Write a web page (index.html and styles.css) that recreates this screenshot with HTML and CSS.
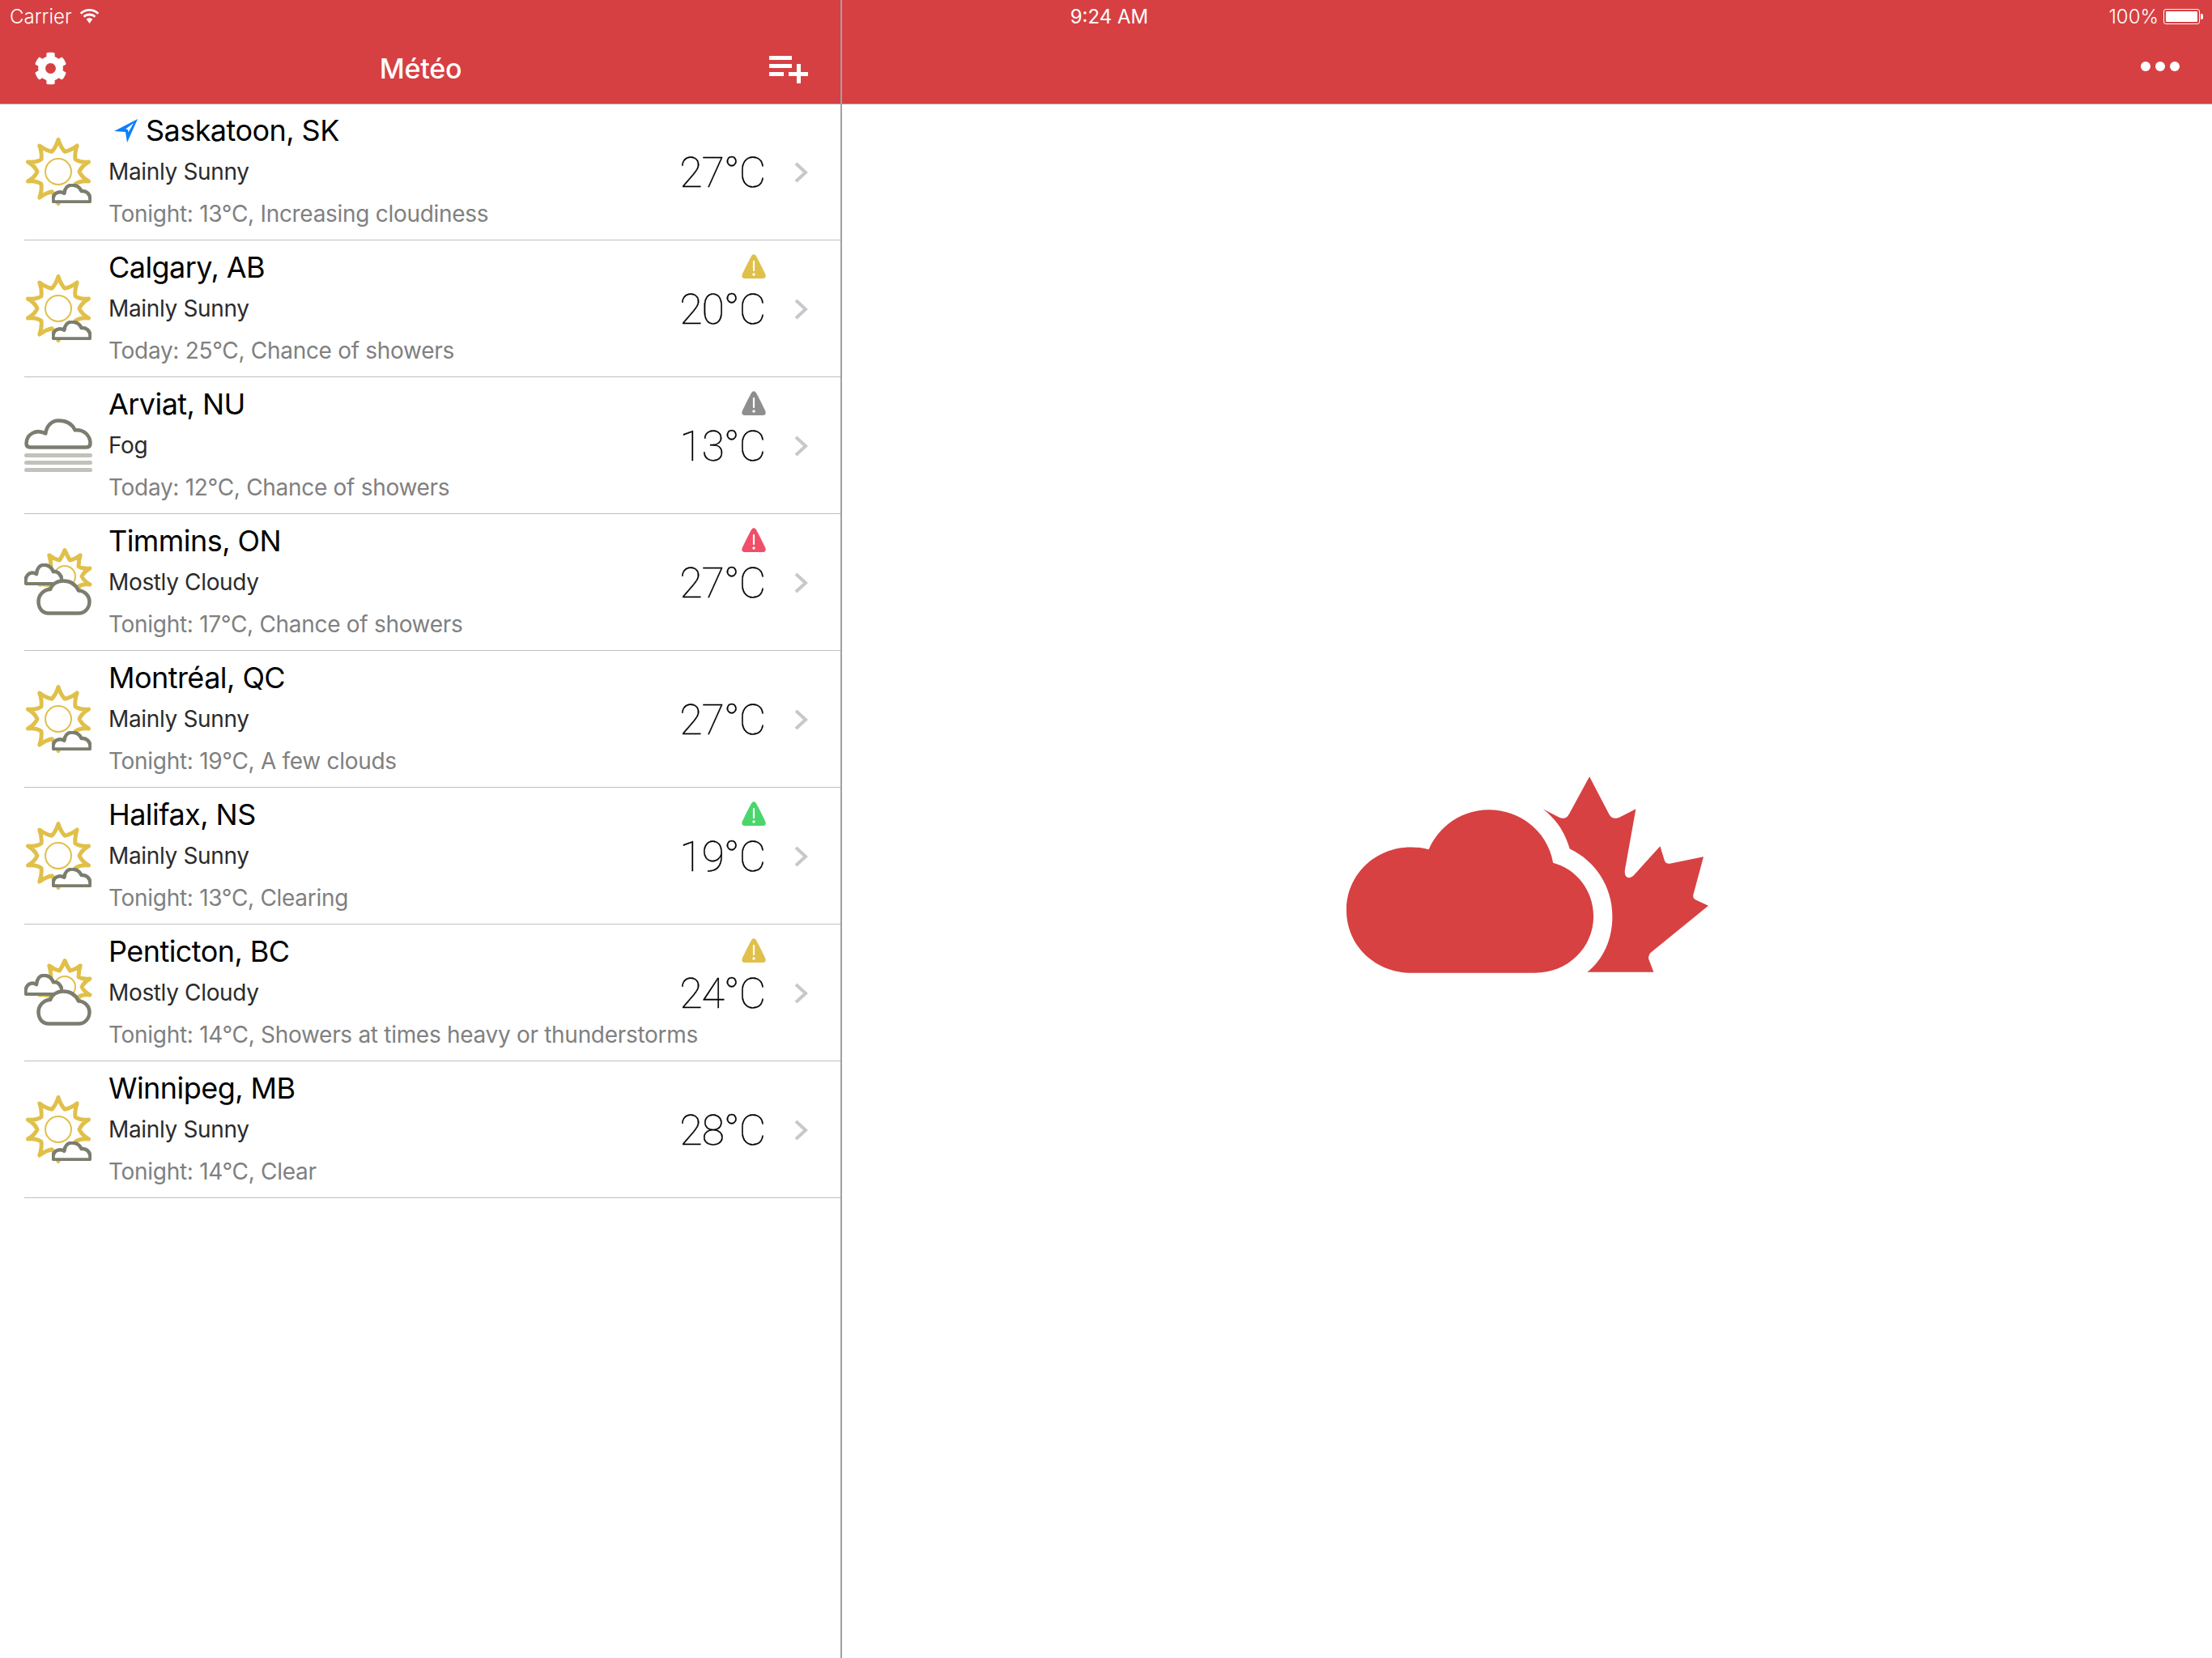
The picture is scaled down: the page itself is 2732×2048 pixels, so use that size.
FILE: index.html
```html
<!DOCTYPE html>
<html lang="fr">
<head>
<meta charset="utf-8">
<title>Météo</title>
<link rel="stylesheet" href="styles.css">
</head>
<body>
<svg class="defs" width="0" height="0" aria-hidden="true">
  <defs>
    <symbol id="cloud-flat" viewBox="0 0 83 37" preserveAspectRatio="none">
      <path class="cloud-line" d="M7 34.5H76Q80.5 34.5 80.5 30C80.5 20 72 12.5 62 14C58 6 50 2.5 42 2.5C33 2.5 27 9 26 18C14 12 2.5 19 2.5 30Q2.5 34.5 7 34.5Z"/>
    </symbol>
    <symbol id="cloud-round" viewBox="0 0 68 45" preserveAspectRatio="none">
      <path class="cloud-line" d="M15 42.5H52C60 42.5 65.5 36 65.5 28C65.5 21 60 15 52 14.5C48 6 41 2.5 33 2.5C25 2.5 19 7 17 13C9 13 2.5 20 2.5 28C2.5 36 7 42.5 15 42.5Z"/>
    </symbol>
    <symbol id="ic-sunny" viewBox="0 0 88 88">
      <path class="sun-ray" d="M44 4.5Q47 14 52 19.3Q59 18 67.2 12Q64 21 65 28.7Q71 33 81.5 32Q73 37 70 44Q73 51 81.5 56Q71 55 65 59.3Q64 67 67.2 76Q59 70 52 68.7Q47 74 44 83.5Q41 74 36 68.7Q29 70 20.8 76Q24 67 23 59.3Q17 55 6.5 56Q15 51 18 44Q15 37 6.5 32Q17 33 23 28.7Q24 21 20.8 12Q29 18 36 19.3Q41 14 44 4.5Z"/>
      <circle class="sun-disc" cx="44" cy="44" r="16"/>
      <use href="#cloud-flat" class="cloud" x="36" y="59" width="49" height="24"/>
    </symbol>
    <symbol id="ic-cloudy" viewBox="0 0 88 88">
      <path class="sun-ray" d="M52 4.5Q55 12 58.5 17Q64 16 71.2 10.8Q69 18 69 24.7Q74 28 83 27Q76 31 73 37Q76 43 83 47Q74 46 69 49.3Q69 56 71.2 63.2Q64 58 58.5 57Q55 62 52 69.5Q49 62 45.5 57Q40 58 32.8 63.2Q35 56 35 49.3Q30 46 21 47Q28 43 31 37Q28 31 21 27Q30 28 35 24.7Q35 18 32.8 10.8Q40 16 45.5 17Q49 12 52 4.5Z"/>
      <circle class="sun-disc" cx="52" cy="37" r="13"/>
      <use href="#cloud-flat" class="cloud" x="2" y="21" width="48" height="27"/>
      <use href="#cloud-round" class="cloud" x="17" y="40" width="68" height="45"/>
    </symbol>
    <symbol id="ic-fog" viewBox="0 0 88 88">
      <use href="#cloud-flat" class="cloud" x="2" y="11" width="84" height="38"/>
      <rect class="fog-bar" x="2" y="54" width="84" height="5" rx="2.5"/>
      <rect class="fog-bar" x="2" y="63" width="84" height="5" rx="2.5"/>
      <rect class="fog-bar" x="2" y="72" width="84" height="5" rx="2.5"/>
    </symbol>
    <symbol id="ic-alert" viewBox="0 0 30 30">
      <path fill="currentColor" d="M12.6 1.6Q15 -1 17.4 1.6Q19 3.6 29.2 24.6Q31 30 26 30H4Q-1 30 .8 24.6Q11 3.6 12.6 1.6Z"/>
      <rect x="13.9" y="8" width="2.2" height="13" rx="1" fill="#fff"/>
      <circle cx="15" cy="25" r="1.7" fill="#fff"/>
    </symbol>
    <symbol id="ic-chevron" viewBox="0 0 17 26">
      <path d="M2 2L14 13L2 24" fill="none" stroke="#c7c7cc" stroke-width="4"/>
    </symbol>
  </defs>
</svg>

<div class="status-bar">
  <div class="status-left">
    <span>Carrier</span>
    <svg class="wifi" viewBox="0 0 23 17" width="25" height="18"><path fill="#fff" d="M11.5 0C7.2 0 3.3 1.7.4 4.4L2.2 6.3C4.6 4 7.9 2.6 11.5 2.6S18.4 4 20.8 6.3L22.6 4.4C19.7 1.7 15.8 0 11.5 0ZM11.5 5.3C8.7 5.3 6.1 6.4 4.1 8.2L5.9 10.1C7.4 8.8 9.4 8 11.5 8S15.6 8.8 17.1 10.1L18.9 8.2C16.9 6.4 14.3 5.3 11.5 5.3ZM11.5 10.6C10.1 10.6 8.9 11.1 7.9 12L11.5 17L15.1 12C14.1 11.1 12.9 10.6 11.5 10.6Z"/></svg>
  </div>
  <div class="status-time">9:24 AM</div>
  <div class="status-right">
    <span>100%</span>
    <span class="battery"><span class="battery-fill"></span></span>
    <span class="battery-nub"></span>
  </div>
</div>

<div class="app">
  <aside class="master">
    <header class="nav">
      <svg class="gear" viewBox="0 0 512 512" width="41" height="41"><path fill="#fff" d="M487.4 315.7l-42.6-24.6c4.3-23.2 4.3-47 0-70.2l42.6-24.6c4.9-2.8 7.1-8.6 5.5-14-11.1-35.6-30-67.8-54.7-94.6-3.8-4.1-10-5.1-14.8-2.3L380.8 110c-17.9-15.4-38.5-27.3-60.8-35.1V25.8c0-5.6-3.9-10.5-9.4-11.7-36.7-8.2-74.3-7.8-109.2 0-5.5 1.2-9.4 6.1-9.4 11.7V75c-22.2 7.9-42.8 19.8-60.8 35.1L88.7 85.5c-4.9-2.8-11-1.9-14.8 2.3-24.7 26.7-43.6 58.9-54.7 94.6-1.7 5.4.6 11.2 5.5 14L67.3 221c-4.3 23.2-4.3 47 0 70.2l-42.6 24.6c-4.9 2.8-7.1 8.6-5.5 14 11.1 35.6 30 67.8 54.7 94.6 3.8 4.1 10 5.1 14.8 2.3l42.6-24.6c17.9 15.4 38.5 27.3 60.8 35.1v49.2c0 5.6 3.9 10.5 9.4 11.7 36.7 8.2 74.3 7.8 109.2 0 5.5-1.2 9.4-6.1 9.4-11.7v-49.2c22.2-7.9 42.8-19.8 60.8-35.1l42.6 24.6c4.9 2.8 11 1.9 14.8-2.3 24.7-26.7 43.6-58.9 54.7-94.6 1.5-5.5-.7-11.3-5.6-14.1zM256 336c-44.1 0-80-35.9-80-80s35.9-80 80-80 80 35.9 80 80-35.9 80-80 80z"/></svg>
      <h1 class="nav-title">Météo</h1>
      <svg class="add-list" viewBox="0 0 48 34" width="48" height="34"><path fill="#fff" d="M0 0H28V5H0ZM0 10H28V15H0ZM0 20H18V25H0ZM24 20H34V10H39V20H48V25H39V34H34V25H24Z"/></svg>
    </header>
    <ul class="cities">
      <li class="city">
        <svg class="wx"><use href="#ic-sunny"/></svg>
        <div class="city-text">
          <div class="city-name"><svg class="loc" viewBox="0 0 29 29" width="29" height="29"><path fill="#0a80ff" fill-rule="evenodd" d="M29 0L0 15L14 16L16 29ZM24 5L14 12.5L17 13L17.5 16.5Z"/></svg>Saskatoon, SK</div>
          <div class="city-cond">Mainly Sunny</div>
          <div class="city-fc">Tonight: 13°C, Increasing cloudiness</div>
        </div>
        <div class="city-temp">27°C</div>
        <svg class="chev"><use href="#ic-chevron"/></svg>
      </li>
      <li class="city">
        <svg class="wx"><use href="#ic-sunny"/></svg>
        <div class="city-text">
          <div class="city-name">Calgary, AB</div>
          <div class="city-cond">Mainly Sunny</div>
          <div class="city-fc">Today: 25°C, Chance of showers</div>
        </div>
        <svg class="alert alert-yellow"><use href="#ic-alert"/></svg>
        <div class="city-temp">20°C</div>
        <svg class="chev"><use href="#ic-chevron"/></svg>
      </li>
      <li class="city">
        <svg class="wx"><use href="#ic-fog"/></svg>
        <div class="city-text">
          <div class="city-name">Arviat, NU</div>
          <div class="city-cond">Fog</div>
          <div class="city-fc">Today: 12°C, Chance of showers</div>
        </div>
        <svg class="alert alert-gray"><use href="#ic-alert"/></svg>
        <div class="city-temp">13°C</div>
        <svg class="chev"><use href="#ic-chevron"/></svg>
      </li>
      <li class="city">
        <svg class="wx"><use href="#ic-cloudy"/></svg>
        <div class="city-text">
          <div class="city-name">Timmins, ON</div>
          <div class="city-cond">Mostly Cloudy</div>
          <div class="city-fc">Tonight: 17°C, Chance of showers</div>
        </div>
        <svg class="alert alert-red"><use href="#ic-alert"/></svg>
        <div class="city-temp">27°C</div>
        <svg class="chev"><use href="#ic-chevron"/></svg>
      </li>
      <li class="city">
        <svg class="wx"><use href="#ic-sunny"/></svg>
        <div class="city-text">
          <div class="city-name">Montréal, QC</div>
          <div class="city-cond">Mainly Sunny</div>
          <div class="city-fc">Tonight: 19°C, A few clouds</div>
        </div>
        <div class="city-temp">27°C</div>
        <svg class="chev"><use href="#ic-chevron"/></svg>
      </li>
      <li class="city">
        <svg class="wx"><use href="#ic-sunny"/></svg>
        <div class="city-text">
          <div class="city-name">Halifax, NS</div>
          <div class="city-cond">Mainly Sunny</div>
          <div class="city-fc">Tonight: 13°C, Clearing</div>
        </div>
        <svg class="alert alert-green"><use href="#ic-alert"/></svg>
        <div class="city-temp">19°C</div>
        <svg class="chev"><use href="#ic-chevron"/></svg>
      </li>
      <li class="city">
        <svg class="wx"><use href="#ic-cloudy"/></svg>
        <div class="city-text">
          <div class="city-name">Penticton, BC</div>
          <div class="city-cond">Mostly Cloudy</div>
          <div class="city-fc">Tonight: 14°C, Showers at times heavy or thunderstorms</div>
        </div>
        <svg class="alert alert-yellow"><use href="#ic-alert"/></svg>
        <div class="city-temp">24°C</div>
        <svg class="chev"><use href="#ic-chevron"/></svg>
      </li>
      <li class="city">
        <svg class="wx"><use href="#ic-sunny"/></svg>
        <div class="city-text">
          <div class="city-name">Winnipeg, MB</div>
          <div class="city-cond">Mainly Sunny</div>
          <div class="city-fc">Tonight: 14°C, Clear</div>
        </div>
        <div class="city-temp">28°C</div>
        <svg class="chev"><use href="#ic-chevron"/></svg>
      </li>
    </ul>
  </aside>
  <main class="detail">
    <header class="nav nav-detail">
      <svg class="more" viewBox="0 0 48 12" width="48" height="12"><circle cx="6" cy="6" r="6" fill="#fff"/><circle cx="24" cy="6" r="6" fill="#fff"/><circle cx="42" cy="6" r="6" fill="#fff"/></svg>
    </header>
    <div class="splash">
      <svg class="logo" viewBox="127 87 1342 728" width="447" height="243">
        <path fill="#d74142" d="M370 815H825C950 815 1043 720 1043 605C1043 510 980 430 893 407C875 295 775 210 655 210C555 210 470 270 432 357C410 351 390 349 365 349C235 349 127 450 127 582C127 715 235 815 370 815Z"/>
        <path fill="#d74142" d="M855 207L915 238Q940 250 953 225L1028 87L1100 225Q1113 250 1140 238L1200 207L1160 430Q1155 462 1175 462Q1185 462 1197 448L1290 345L1306 397Q1310 413 1330 409L1451 384L1413 525Q1410 538 1422 544L1469 566L1255 740Q1242 752 1250 770L1266 812H1020C1080 765 1113 690 1113 605C1113 495 1050 400 955 355C935 290 905 245 855 207Z"/>
      </svg>
    </div>
  </main>
</div>
</body>
</html>
```

FILE: styles.css
```css
* { box-sizing: border-box; }

html, body {
  margin: 0;
  height: 100%;
  background: #fff;
  font-family: Inter, "Liberation Sans", sans-serif;
}

.defs { position: absolute; }

.cloud-line {
  vector-effect: non-scaling-stroke;
  fill: #fff;
  stroke: #7b7d6f;
  stroke-width: 4.5;
  stroke-linejoin: round;
}

.sun-ray {
  fill: #fff;
  stroke: #e0c04a;
  stroke-width: 5;
  stroke-linejoin: round;
}

.sun-disc {
  fill: #fff;
  stroke: #e0c04a;
  stroke-width: 2;
}

.fog-bar { fill: #c2c1bc; }

.status-bar {
  position: absolute;
  top: 0;
  left: 0;
  width: 2732px;
  height: 40px;
  display: grid;
  grid-template-columns: 1fr auto 1fr;
  align-items: center;
  padding: 0 11px 0 12px;
  color: #fff;
  font-size: 24px;
  font-weight: 300;
}

.status-left {
  display: flex;
  align-items: center;
  gap: 9px;
}

.status-time {
  font-weight: 400;
  font-size: 24px;
  padding-left: 7px;
}

.status-right {
  display: flex;
  justify-content: flex-end;
  align-items: center;
}

.battery {
  width: 45px;
  height: 19px;
  margin-left: 6px;
  padding: 2px;
  border: 1px solid #fff;
  border-radius: 3px;
  display: flex;
}

.battery-fill {
  flex: 1;
  background: #fff;
  border-radius: 1px;
}

.battery-nub {
  width: 3px;
  height: 7px;
  margin-left: 1px;
  background: #fff;
  border-radius: 0 2px 2px 0;
}

.app {
  display: flex;
  height: 2048px;
}

.master {
  width: 1040px;
  flex: none;
  border-right: 2px solid #a0a0a4;
}

.nav {
  height: 128px;
  padding: 40px 40px 0 43px;
  background: #d64042;
  box-shadow: 0 1px 0 #b0b0b2;
  display: grid;
  grid-template-columns: 1fr auto 1fr;
  align-items: center;
}

.nav-title {
  margin: 0;
  color: #fff;
  font-size: 34px;
  font-weight: 500;
  letter-spacing: -0.2px;
  padding-right: 2px;
}

.gear { justify-self: start; margin-left: -1px; }
.add-list { justify-self: end; margin-top: 4px; }

.nav-detail { display: flex; justify-content: flex-end; }
.more { margin-top: -4px; }

.cities {
  list-style: none;
  margin: 0;
  padding: 0;
}

.city {
  position: relative;
  height: 169px;
  margin-left: 30px;
  padding-top: 2px;
  border-bottom: 1px solid #bfbfc4;
  display: flex;
  align-items: center;
}

.wx {
  width: 88px;
  height: 88px;
  flex: none;
  margin: -2px 18px 0 -2px;
}

.city-text {
  flex: 1;
  min-width: 0;
  height: 100%;
  display: flex;
  flex-direction: column;
}

.city-name {
  height: 50px;
  margin-top: 6px;
  display: flex;
  align-items: center;
  font-size: 36px;
  color: #000;
  letter-spacing: -0.55px;
  line-height: 50px;
}

.loc {
  margin-left: 7px;
  margin-right: 10px;
}

.city-cond {
  height: 40px;
  margin-top: 6px;
  font-size: 28px;
  line-height: 40px;
  color: #2b2b2b;
  letter-spacing: -0.35px;
}

.city-fc {
  height: 40px;
  margin-top: 12px;
  font-size: 28px;
  line-height: 40px;
  color: #808080;
  white-space: nowrap;
  letter-spacing: -0.3px;
}

.city-temp {
  font-family: Roboto, Inter, sans-serif;
  font-size: 52px;
  font-weight: 100;
  color: #000;
  -webkit-text-stroke: 0.35px #000;
  text-align: right;
  white-space: nowrap;
  letter-spacing: -1.2px;
}

.chev {
  width: 17px;
  height: 26px;
  margin-left: 36px;
  margin-right: 40px;
  flex: none;
}

.alert {
  position: absolute;
  top: 17px;
  left: 886px;
  width: 30px;
  height: 30px;
}

.alert-yellow { color: #e0c04a; }
.alert-gray { color: #8e8e8e; }
.alert-red { color: #ef4f68; }
.alert-green { color: #4ad66d; }

.detail {
  flex: 1;
  display: flex;
  flex-direction: column;
}

.splash {
  flex: 1;
  display: flex;
  align-items: center;
  justify-content: center;
  padding-bottom: 15px;
}
```
